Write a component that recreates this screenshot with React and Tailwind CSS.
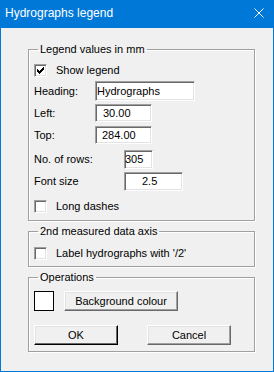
import React from "react";

function Checkbox({ checked }) {
  return (
    <span className="w-[13px] h-[13px] shrink-0 bg-white border border-t-[#a0a0a0] border-l-[#a0a0a0] border-b-white border-r-white shadow-[inset_1px_1px_0_#696969,inset_-1px_-1px_0_#e3e3e3] flex items-center justify-center">
      {checked && (
        <svg width="9" height="9" viewBox="0 0 9 9" shapeRendering="crispEdges">
          <path d="M1 3h1v1h1v1h1V4h1V3h1V2h1V1h1v3h-1v1h-1v1h-1v1h-1v1H3V7H2V6H1z" fill="#000" />
        </svg>
      )}
    </span>
  );
}

function Field({ value, className }) {
  return (
    <div
      className={
        "bg-white border border-t-[#a0a0a0] border-l-[#a0a0a0] border-b-white border-r-white shadow-[inset_1px_1px_0_#696969,inset_-1px_-1px_0_#e3e3e3] flex items-center leading-[13px] " +
        className
      }
    >
      {value}
    </div>
  );
}

function Button({ children, className, isDefault }) {
  return (
    <div
      className={
        "bg-[#f0f0f0] h-[20px] flex items-center justify-center border border-t-white border-l-white leading-[13px] " +
        (isDefault
          ? "border-b-[#000] border-r-[#000] shadow-[inset_-1px_-1px_0_#696969,inset_1px_1px_0_#e3e3e3] "
          : "border-b-[#696969] border-r-[#696969] shadow-[inset_-1px_-1px_0_#a0a0a0,inset_1px_1px_0_#e3e3e3] ") +
        className
      }
    >
      {children}
    </div>
  );
}

function Group({ title, className, children }) {
  return (
    <fieldset
      className={
        "border border-[#a0a0a0] shadow-[1px_1px_0_#fff,inset_1px_1px_0_#fff] px-[5px] min-w-0 " + className
      }
    >
      <legend className="ml-[4px] px-[2px] leading-[13px]">{title}</legend>
      {children}
    </fieldset>
  );
}

export default function App() {
  return (
    <div className="w-[274px] h-[372px] border border-[#0078d7] bg-[#f0f0f0] flex flex-col font-['Liberation_Sans',Arial,sans-serif] text-[11px] text-black overflow-hidden">
      <div className="h-[27px] shrink-0 bg-[#0078d7] flex items-start justify-between pl-[4px] pr-[9px] pt-[5px] text-white">
        <span className="text-[12px] leading-[14px]">Hydrographs legend</span>
        <svg width="10" height="10" viewBox="0 0 10 10" className="mt-[2px]">
          <path d="M0.5 0.5L9.5 9.5M9.5 0.5L0.5 9.5" stroke="#fff" strokeWidth="1" />
        </svg>
      </div>
      <div className="flex flex-col pl-[27px] pr-[18px]">
        <Group title="Legend values in mm" className="mt-[15px] pb-[7px]">
          <div className="flex items-center mt-[8px]">
            <Checkbox checked />
            <span className="ml-[9px] leading-[13px]">Show legend</span>
          </div>
          <div className="flex items-center mt-[4px]">
            <span className="w-[61px]">Heading:</span>
            <Field value="Hydrographs" className="w-[100px] h-[20px] pl-[1px]" />
          </div>
          <div className="flex items-center mt-[3px]">
            <span className="w-[61px]">Left:</span>
            <Field value="30.00" className="w-[57px] h-[18px] pl-[7px]" />
          </div>
          <div className="flex items-center mt-[4px]">
            <span className="w-[61px]">Top:</span>
            <Field value="284.00" className="w-[57px] h-[18px] pl-[6px]" />
          </div>
          <div className="flex items-center mt-[6px]">
            <span className="w-[90px]">No. of rows:</span>
            <Field value="305" className="w-[29px] h-[19px] pl-0" />
          </div>
          <div className="flex items-center mt-[3px]">
            <span className="w-[90px]">Font size</span>
            <Field value="2.5" className="w-[59px] h-[19px] pl-[17px]" />
          </div>
          <div className="flex items-center mt-[9px]">
            <Checkbox />
            <span className="ml-[9px] leading-[13px]">Long dashes</span>
          </div>
        </Group>

        <Group title="2nd measured data axis" className="mt-[4px] pb-[6px]">
          <div className="flex items-center mt-[9px]">
            <Checkbox />
            <span className="ml-[9px] leading-[13px]">Label hydrographs with '/2'</span>
          </div>
        </Group>

        <Group title="Operations" className="mt-[4px] pb-[6px]">
          <div className="flex items-center mt-[7px]">
            <div className="w-[20px] h-[20px] bg-white border border-black" />
            <Button className="w-[114px] ml-[10px]">Background colour</Button>
          </div>
          <div className="flex items-center mt-[14px]">
            <Button className="w-[84px]" isDefault>OK</Button>
            <Button className="w-[84px] ml-[29px]">Cancel</Button>
          </div>
        </Group>
      </div>
    </div>
  );
}
